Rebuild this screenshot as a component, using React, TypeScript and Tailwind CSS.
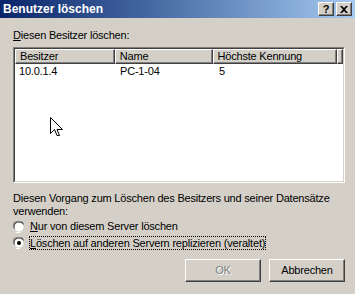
import React from "react";

const font = { fontFamily: '"Liberation Sans", Arial, sans-serif' };

const Radio = ({ checked }: { checked?: boolean }) => (
  <span className="relative inline-block w-3 h-3 shrink-0">
    <svg width="12" height="12" viewBox="0 0 12 12" className="absolute inset-0">
      <path d="M4 0h4l2 1 1 2v1h-1v-1l-1-1-1-1h-4l-2 1-1 1v4h-1v-4l1-2z" fill="#808080" />
      <path d="M4 1h4l2 1v1h-1l-1-1h-4l-1 1-1 1v4h-1v-4l1-2z" fill="#404040" />
      <circle cx="6" cy="6" r="4.5" fill="#fff" />
      <path d="M11 4v4l-1 2-2 1-2 1h-2l-2-1v-0h6l2-1 1-2v-4z" fill="#fff" />
      {checked && <circle cx="6" cy="6" r="2" fill="#000" />}
    </svg>
  </span>
);

const Header = ({ w, children }: { w: string; children?: React.ReactNode }) => (
  <div
    className={`${w} h-[15px] bg-[#d4d0c8] border-t border-l border-t-white border-l-white border-r border-b border-r-[#404040] border-b-[#404040] shadow-[inset_-1px_-1px_0_#808080] pl-[4px] leading-[13px] text-[11px] text-black whitespace-nowrap overflow-hidden`}
  >
    {children}
  </div>
);

export default function App() {
  return (
    <div className="w-[355px] h-[294px] bg-[#d4d0c8] flex flex-col overflow-hidden relative tracking-[-0.2px]" style={font}>
      <div className="h-[18px] bg-gradient-to-r from-[#0a246a] to-[#a6caf0] flex items-center pl-[3px] pr-[3px]">
        <span className="text-white font-bold text-[12px] leading-none flex-1 tracking-normal">Benutzer löschen</span>
        <div className="flex gap-[2px]">
          <div className="w-4 h-[14px] bg-[#d4d0c8] border-t border-l border-white border-r border-b border-r-[#404040] border-b-[#404040] shadow-[inset_-1px_-1px_0_#808080] flex items-center justify-center text-[11px] font-bold leading-none text-black">
            ?
          </div>
          <div className="w-4 h-[14px] bg-[#d4d0c8] border-t border-l border-white border-r border-b border-r-[#404040] border-b-[#404040] shadow-[inset_-1px_-1px_0_#808080] flex items-center justify-center">
            <svg width="8" height="7" viewBox="0 0 8 7">
              <path d="M0 0h2l2 2 2-2h2l-3 3.5 3 3.5h-2l-2-2-2 2h-2l3-3.5z" fill="#000" />
            </svg>
          </div>
        </div>
      </div>

      <div className="pl-[13px] pr-[10px] flex flex-col text-[11px] text-black">
        <div className="mt-[11px] leading-[13px]">
          <span className="underline">D</span>iesen Besitzer löschen:
        </div>

        <div className="mt-[5px] w-[332px] h-[136px] border border-t-[#808080] border-l-[#808080] border-r-white border-b-white">
          <div className="w-full h-full border border-t-[#404040] border-l-[#404040] border-r-[#d4d0c8] border-b-[#d4d0c8] bg-white flex flex-col overflow-hidden">
            <div className="flex">
              <Header w="w-[101px]">Besitzer</Header>
              <Header w="w-[99px]">Name</Header>
              <Header w="w-[126px]">Höchste Kennung</Header>
              <Header w="flex-1" />
            </div>
            <div className="flex leading-[13px] mt-[1px]">
              <div className="w-[101px] pl-[4px]">10.0.1.4</div>
              <div className="w-[99px] pl-[4px]">PC-1-04</div>
              <div className="w-[126px] pl-[4px]">5</div>
            </div>
          </div>
        </div>

        <div className="mt-[9px] leading-[13px]">
          Diesen Vorgang zum Löschen des Besitzers und seiner Datensätze
          <br />
          verwenden:
        </div>

        <div className="mt-[2px] flex items-center gap-[4px] h-[13px]">
          <Radio />
          <span className="leading-[13px] ml-[1px]">
            <span className="underline">N</span>ur von diesem Server löschen
          </span>
        </div>
        <div className="mt-[3px] flex items-center gap-[4px] h-[14px]">
          <Radio checked />
          <span className="leading-[12px] border border-dotted border-black px-0">
            <span className="underline">L</span>öschen auf anderen Servern replizieren (veraltet)
          </span>
        </div>

        <div className="mt-[9px] flex justify-end gap-[8px] pr-[0px]">
          <div className="w-[76px] h-[23px] border-t border-l border-white border-r border-b border-r-[#404040] border-b-[#404040] shadow-[inset_-1px_-1px_0_#808080] flex items-center justify-center text-[#808080] [text-shadow:1px_1px_0_#fff]">
            OK
          </div>
          <div className="w-[76px] h-[23px] border-t border-l border-white border-r border-b border-r-[#404040] border-b-[#404040] shadow-[inset_-1px_-1px_0_#808080] flex items-center justify-center">
            Abbrechen
          </div>
        </div>
      </div>

      <svg width="13" height="21" viewBox="0 0 13 21" className="absolute left-[50px] top-[117px]">
        <path
          d="M0.5 0.5v16l4-4 2.5 6h2.5l-2.5-6h5.5z"
          fill="#fff"
          stroke="#000"
          strokeWidth="1"
        />
      </svg>
    </div>
  );
}
